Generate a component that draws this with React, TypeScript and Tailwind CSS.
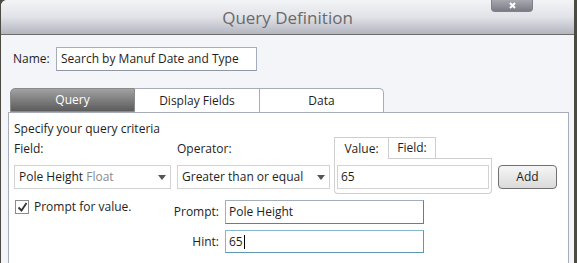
const font = { fontFamily: '"Open Sans", "Noto Sans", sans-serif' };

function Arrow() {
  return (
    <svg width="8" height="5" viewBox="0 0 8 5" className="shrink-0">
      <path d="M0 0h8L4 5z" fill="#555" />
    </svg>
  );
}

export default function App() {
  return (
    <div className="w-[577px] h-[263px] overflow-hidden bg-[#4b4b44]" style={font}>
      <div className="relative h-full ml-[1px] mr-[3px] rounded-tl-[6px] overflow-hidden bg-[#f4f5f8] text-[12px] text-[#1e1e1e]">
        {/* title bar */}
        <div className="h-[35px] flex items-center justify-center bg-gradient-to-b from-[#f3f4f6] via-[#e2e3e8] to-[#b3b5c0] border-b border-[#6c6c6c]">
          <span className="text-[17px] text-[#6a6a6a] mt-[1px]">Query Definition</span>
        </div>
        <div className="absolute top-0 right-[41px] w-[42px] h-[12px] rounded-b-[4px] bg-gradient-to-b from-[#a8a8b0] to-[#7c7c86] border border-t-0 border-[#80808a] flex items-center justify-center">
          <svg width="7" height="7" viewBox="0 0 7 7">
            <path d="M1 1l5 5M6 1l-5 5" stroke="#fff" strokeWidth="2" />
          </svg>
        </div>

        {/* name row */}
        <div className="flex items-center mt-[12px] ml-[12px]">
          <span className="w-[43px]">Name:</span>
          <div className="w-[201px] h-[24px] bg-white border border-[#a4adba] border-b-[#8d97a5] flex items-center px-[4px]">
            Search by Manuf Date and Type
          </div>
        </div>

        {/* tabs */}
        <div className="flex mt-[17px] ml-[9px] h-[24px]">
          <div className="w-[125px] rounded-tl-[5px] bg-gradient-to-b from-[#a2a2a2] to-[#5c5c5c] border border-[#8a8a8a] text-white flex items-center justify-center">
            Query
          </div>
          <div className="w-[125px] bg-white border-t border-r border-[#a8abb8] flex items-center justify-center">
            Display Fields
          </div>
          <div className="w-[124px] bg-white border-t border-r border-[#a8abb8] rounded-tr-[5px] flex items-center justify-center">
            Data
          </div>
        </div>

        {/* panel */}
        <div className="ml-[7px] w-[561px] h-[160px] bg-white border border-[#a8abb8] pl-[5px] pt-[8px]">
          <div className="h-[16px] leading-[16px]">Specify your query criteria</div>
          <div className="flex items-start">
            <div className="w-[157px]">
              <div className="mt-[4px] h-[16px] leading-[16px]">Field:</div>
              <div className="mt-[8px] h-[24px] border border-[#d3d3d3] flex items-center px-[4px] justify-between">
                <span>
                  Pole Height <span className="text-[#8a8a8a]">Float</span>
                </span>
                <Arrow />
              </div>
            </div>
            <div className="w-[153px] ml-[6px]">
              <div className="mt-[4px] h-[16px] leading-[16px]">Operator:</div>
              <div className="mt-[8px] h-[24px] border border-[#d3d3d3] flex items-center px-[4px] justify-between">
                <span>Greater than or equal</span>
                <Arrow />
              </div>
            </div>
            <div className="w-[158px] ml-[4px]">
              <div className="flex h-[22px]">
                <div className="w-[55px] border-t border-l border-r border-[#cfcfcf] flex items-center justify-center">
                  Value:
                </div>
                <div className="w-[47px] border-t border-r border-b border-[#cfcfcf] flex items-center justify-center">
                  Field:
                </div>
                <div className="flex-1 border-b border-[#cfcfcf]" />
              </div>
              <div className="h-[35px] border border-t-0 border-[#cfcfcf] rounded-b-[4px] px-[2px] pt-[6px]">
                <div className="h-[24px] border border-[#d3d3d3] flex items-center px-[3px]">65</div>
              </div>
            </div>
            <div className="ml-[6px] mt-[28px] w-[59px] h-[24px] rounded-[4px] border border-[#707070] bg-gradient-to-b from-[#f6f6f6] to-[#dadada] flex items-center justify-center">
              Add
            </div>
          </div>
          <div className="flex mt-[6px]">
            <div className="w-[150px] flex items-start">
              <div className="ml-[1px] w-[14px] h-[14px] border border-[#8c8c8c] bg-white flex items-center justify-center">
                <svg width="11" height="10" viewBox="0 0 11 10">
                  <path d="M1.5 5.5l3 3L9.5 1" stroke="#333" strokeWidth="1.8" fill="none" />
                </svg>
              </div>
              <span className="ml-[5px] leading-[14px]">Prompt for value.</span>
            </div>
            <div className="grid grid-cols-[55px_199px] gap-x-[6px] gap-y-[6px] items-center">
              <span className="text-right">Prompt:</span>
              <div className="h-[24px] border border-[#a4adba] border-b-[#6f7b88] border-r-[#6f7b88] flex items-center px-[3px]">
                Pole Height
              </div>
              <span className="text-right">Hint:</span>
              <div className="h-[23px] border border-[#86b8cc] border-b-[#5e98b0] border-r-[#5e98b0] flex items-center px-[3px]">
                65<span className="w-[1px] h-[14px] bg-black ml-[1px]" />
              </div>
            </div>
          </div>
        </div>
      </div>
    </div>
  );
}
